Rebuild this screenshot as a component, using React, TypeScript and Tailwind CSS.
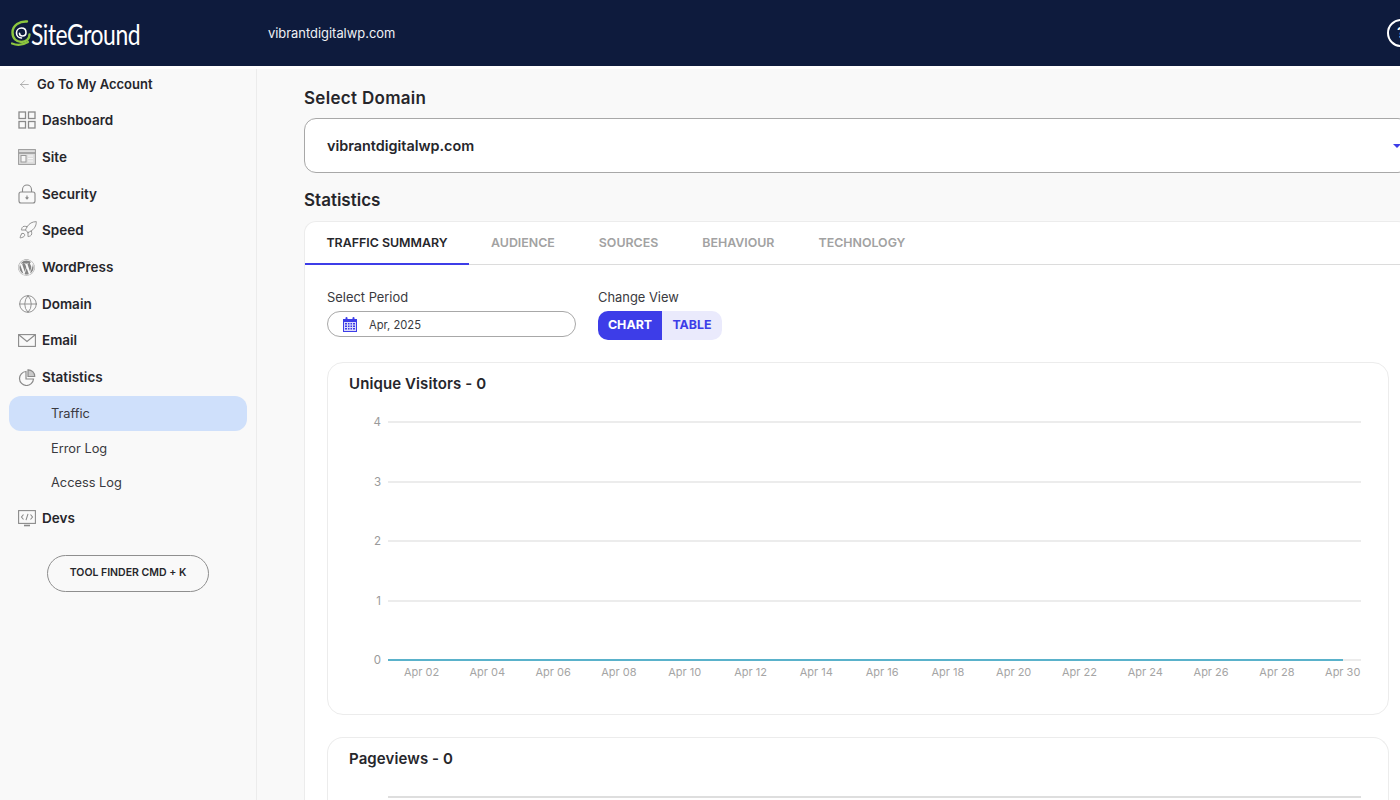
import { ArrowLeft, Globe, Rocket } from 'lucide-react';
import { FaWordpress } from 'react-icons/fa';
import type { ReactNode } from 'react';

const heading = "font-['Inter',sans-serif]";

function DashboardIcon() {
  return (
    <svg width="18" height="18" viewBox="0 0 18 18" fill="none" stroke="#8a8a8a" strokeWidth="1.3">
      <rect x="1" y="1" width="6.5" height="6.5" />
      <rect x="10.5" y="1" width="6.5" height="6.5" />
      <rect x="1" y="10.500" width="6.5" height="6.5" />
      <rect x="10.5" y="10.500" width="6.5" height="6.5" />
    </svg>
  );
}

function SiteIcon() {
  return (
    <svg width="18" height="16" viewBox="0 0 18 16" fill="none" stroke="#999" strokeWidth="1">
      <rect x="0.6" y="0.6" width="16.8" height="14.8" fill="#dedede" />
      <path d="M0.6 4h16.8" strokeWidth="1.6" />
      <rect x="3" y="6.5" width="5" height="6.5" fill="#f6f6f6" />
      <path d="M10 7h5M10 9.500h5M10 12h5" stroke="#f6f6f6" />
    </svg>
  );
}

function LockIcon() {
  return (
    <svg width="18" height="20" viewBox="0 0 18 20" fill="none" stroke="#8a8a8a" strokeWidth="1.1">
      <rect x="1" y="8" width="16" height="11" rx="2" />
      <path d="M4.5 8V5.500a4.500 4.500 0 0 1 9 0V8" />
      <path d="M9 11.500v3.500M7.600 13.400 9 15l1.400-1.600" />
    </svg>
  );
}

function MailIcon() {
  return (
    <svg width="18" height="13" viewBox="0 0 18 13" fill="none" stroke="#8a8a8a" strokeWidth="1.1">
      <rect x="0.6" y="0.6" width="16.800" height="11.800" />
      <path d="M0.8 0.8 9 7.500l8.200-6.700" />
    </svg>
  );
}

function StatsIcon() {
  return (
    <svg width="18" height="17" viewBox="0 0 18 17" fill="none" stroke="#8a8a8a" strokeWidth="1.2">
      <path d="M8 2.500a7 7 0 1 0 7.500 7.500H8z" />
      <path d="M10 0.8a6.500 6.500 0 0 1 6.700 6.700H10z" fill="#c9c9c9" />
    </svg>
  );
}

function DevsIcon() {
  return (
    <svg width="18" height="17" viewBox="0 0 18 17" fill="none" stroke="#8a8a8a" strokeWidth="1.1">
      <rect x="0.6" y="0.6" width="16.800" height="12.800" />
      <path d="M5.500 4.500 3.500 7l2 2.500M12.500 4.500l2 2.500-2 2.500M10 3.800 8 10.200" />
      <path d="M6 15.500h6" strokeWidth="1.6" />
    </svg>
  );
}

function CalendarIcon() {
  return (
    <svg width="14" height="15" viewBox="0 0 14 15" fill="#3d3de8">
      <path d="M0 2h14v13H0z" />
      <rect x="2.500" y="0" width="2" height="3.500" rx="1" />
      <rect x="9.500" y="0" width="2" height="3.500" rx="1" />
      <rect x="1" y="5" width="12" height="9" fill="#dcdcfa" />
      <path d="M2 6h2v1.500H2zM5 6h1.500v1.500H5zM7.500 6H9v1.500H7.500zM10 6h2v1.500h-2zM2 8.500h2V10H2zM5 8.500h1.500V10H5zM7.500 8.500H9V10H7.500zM10 8.500h2V10h-2zM2 11h2v1.500H2zM5 11h1.500v1.500H5zM7.500 11H9v1.500H7.500zM10 11h2v1.500h-2z" />
    </svg>
  );
}

function LogoMark() {
  return (
    <svg width="21" height="28" viewBox="0 0 21 28" fill="none">
      <path d="M16 2.500C9 2 1.500 6 1.500 13.500c0 6 4 9.500 9 9.500 4.500 0 8-3 8-7.500" stroke="#8cc63f" strokeWidth="2.400" strokeLinecap="round" />
      <path d="M1 24.500c5 2 11 1.500 16-1.500" stroke="#8cc63f" strokeWidth="2.200" strokeLinecap="round" />
      <path d="M10.500 19c-3 0-5-2.200-5-5s2.200-5 5-5 4.500 2 4.500 4.500-1.700 3.500-3.500 3.500-3-1.200-3-2.800" stroke="#fff" strokeWidth="1.600" strokeLinecap="round" />
    </svg>
  );
}

const nav: { label: string; icon: ReactNode }[] = [
  { label: 'Dashboard', icon: <DashboardIcon /> },
  { label: 'Site', icon: <SiteIcon /> },
  { label: 'Security', icon: <LockIcon /> },
  { label: 'Speed', icon: <Rocket size={20} strokeWidth={1.1} color="#8a8a8a" /> },
  { label: 'WordPress', icon: <FaWordpress size={17} color="#858585" /> },
  { label: 'Domain', icon: <Globe size={20} strokeWidth={1.1} color="#8a8a8a" /> },
  { label: 'Email', icon: <MailIcon /> },
  { label: 'Statistics', icon: <StatsIcon /> },
];

function NavRow({ label, icon }: { label: string; icon: ReactNode }) {
  return (
    <div className="flex h-[36.7px] items-center pl-[18px]">
      <span className="flex w-[24px] shrink-0 items-center">{icon}</span>
      <span className="text-[13.5px] font-semibold text-[#26262b]">{label}</span>
    </div>
  );
}

function Sidebar() {
  return (
    <aside className="flex w-[257px] shrink-0 flex-col border-r border-[#ececec] bg-[#f9f9f9] text-[#26262b]">
      <div className="flex h-[31px] items-center pl-[18px]">
        <ArrowLeft size={13} strokeWidth={1} color="#777" className="mr-[6px]" />
        <span className="text-[13px] font-semibold">Go To My Account</span>
      </div>
      <div className="h-[2px]" />
      {nav.map((item) => (
        <NavRow key={item.label} {...item} />
      ))}
      <div className="mx-[9px] mt-[0.5px] flex h-[35px] w-[238px] items-center rounded-[12px] bg-[#cfe0fb] pl-[42px] text-[12.8px] text-[#3a3a40]">
        Traffic
      </div>
      <div className="flex h-[35px] items-center pl-[51px] text-[12.8px] text-[#3a3a40]">Error Log</div>
      <div className="flex h-[34px] items-center pl-[51px] text-[12.8px] text-[#3a3a40]">Access Log</div>
      <NavRow label="Devs" icon={<DevsIcon />} />
      <button className="ml-[47px] mt-[18px] flex h-[37px] w-[162px] items-center justify-center rounded-full border border-[#8f8f8f] text-[10.5px] font-semibold text-[#26262b]">
        TOOL FINDER CMD + K
      </button>
    </aside>
  );
}

const xLabels = ['02', '04', '06', '08', '10', '12', '14', '16', '18', '20', '22', '24', '26', '28', '30'];
const yRows = [
  { v: 4, y: 12 },
  { v: 3, y: 72 },
  { v: 2, y: 131 },
  { v: 1, y: 191 },
  { v: 0, y: 250 },
];

function TrafficChart() {
  return (
    <svg width="1060" height="285" viewBox="0 0 1060 285" className="block">
      {yRows.map((r) => (
        <g key={r.v}>
          <line x1="60" x2="1033" y1={r.y} y2={r.y} stroke="#d9d9d9" strokeWidth="1.2" />
          <text x="53" y={r.y + 4} textAnchor="end" fontSize="11.5" fill="#9a9a9a" fontFamily="Inter, sans-serif">
            {r.v}
          </text>
        </g>
      ))}
      <line x1="60" x2="1015" y1="250" y2="250" stroke="#2a9fc0" strokeWidth="1.4" />
      {xLabels.map((d, i) => (
        <text key={d} x={93.5 + i * 65.8} y="266" textAnchor="middle" fontSize="11" fill="#a5a5a5" fontFamily="Inter, sans-serif">
          Apr {d}
        </text>
      ))}
    </svg>
  );
}

export default function App() {
  return (
    <div className={`flex h-[800px] w-[1400px] flex-col overflow-hidden bg-[#f9f9f9] ${heading}`}>
      <header className="flex h-[66px] shrink-0 items-center bg-[#0e1b3d] text-white">
        <div className="flex w-[268px] shrink-0 items-center pl-[11px]">
          <LogoMark />
          <span className="-ml-px inline-block origin-left scale-x-[0.79] font-['Lato',sans-serif] text-[29px] font-normal leading-none tracking-[-0.6px] text-white">SiteGround</span>
        </div>
        <span className="pt-[1px] text-[12.9px] text-[#eef0f5]">vibrantdigitalwp.com</span>
        <div className="ml-auto mr-[-15px] flex h-[28px] w-[28px] items-center justify-center rounded-full border-2 border-white text-[15px] font-semibold">
          ?
        </div>
      </header>
      <div className="h-[3px] shrink-0 bg-white" />
      <div className="flex min-h-0 flex-1">
        <Sidebar />
        <main className="w-[1153px] shrink-0 pl-[47px] pt-[19px]">
          <h2 className="text-[17px] font-semibold leading-[20px] tracking-[0.3px] text-[#26262b]">Select Domain</h2>
          <div className="mt-[10px] flex h-[55px] w-[1106px] items-center rounded-[12px] border border-[#a8a8a8] bg-white pl-[22px]">
            <span className="w-[1066px] text-[14.4px] font-semibold text-[#26262b]">vibrantdigitalwp.com</span>
            <span className="h-0 w-0 border-x-[4px] border-t-[4px] border-x-transparent border-t-[#3d3de8]" />
          </div>
          <h2 className="mt-[17px] text-[17px] font-semibold leading-[20px] text-[#26262b]">Statistics</h2>
          <section className="mt-[11px] w-[1106px] rounded-t-[12px] border border-b-0 border-[#ececec] bg-white">
            <div className="flex h-[43px] border-b border-[#dcdcdc] text-[12.4px] font-semibold">
              <div className="-mb-px flex w-[164px] items-center justify-center border-b-2 border-[#3d3de8] pt-[2px] text-[#26262b]">TRAFFIC SUMMARY</div>
              <div className="ml-[22px] flex items-center text-[#a2a2a2]">AUDIENCE</div>
              <div className="ml-[44px] flex items-center text-[#a2a2a2]">SOURCES</div>
              <div className="ml-[44px] flex items-center text-[#a2a2a2]">BEHAVIOUR</div>
              <div className="ml-[44px] flex items-center text-[#a2a2a2]">TECHNOLOGY</div>
            </div>
            <div className="pl-[22px] pt-[25px]">
              <div className="flex">
                <div className="w-[271px]">
                  <div className="text-[12.9px] leading-[16px] text-[#3a3a40]">Select Period</div>
                  <div className="mt-[5px] flex h-[26px] w-[249px] items-center rounded-full border-[1.5px] border-[#a8a8a8] pl-[15px] text-[11.2px] text-[#3a3a40]">
                    <CalendarIcon />
                    <span className="ml-[12px] pt-[2px]">Apr, 2025</span>
                  </div>
                </div>
                <div>
                  <div className="text-[12.9px] leading-[16px] text-[#3a3a40]">Change View</div>
                  <div className="mt-[5px] flex h-[29px] w-[124px] overflow-hidden rounded-[10px] text-[12.4px] font-bold">
                    <div className="flex w-[64px] items-center justify-center bg-[#3d3de8] text-white">CHART</div>
                    <div className="flex flex-1 items-center justify-center bg-[#eaeafc] text-[#3d3de8]">TABLE</div>
                  </div>
                </div>
              </div>
              <div className="mt-[22px] h-[353px] w-[1062px] rounded-[16px] border border-[#ececec]">
                <h3 className="pl-[21px] pt-[12px] text-[15px] font-semibold leading-[18px] tracking-[0.1px] text-[#26262b]">Unique Visitors - 0</h3>
                <div className="mt-[17px]">
                  <TrafficChart />
                </div>
              </div>
              <div className="mt-[22px] h-[100px] w-[1062px] rounded-t-[16px] border border-b-0 border-[#ececec]">
                <h3 className="pl-[21px] pt-[12px] text-[15px] font-semibold leading-[18px] tracking-[0.1px] text-[#26262b]">Pageviews - 0</h3>
                <div className="ml-[60px] mt-[28px] h-[2px] w-[973px] bg-[#dedede]" />
              </div>
            </div>
          </section>
        </main>
      </div>
    </div>
  );
}
